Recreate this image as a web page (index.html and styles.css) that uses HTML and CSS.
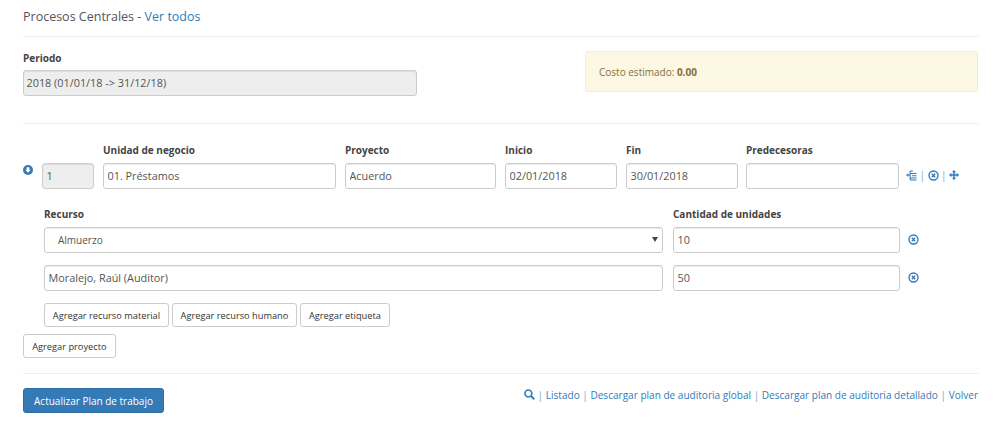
FILE: index.html
```html
<!DOCTYPE html>
<html>
<head>
  <meta charset="utf-8">
  <title>Plan de trabajo</title>
  <link rel="stylesheet" href="styles.css">
</head>
<body>
  <h4 class="title">Procesos Centrales - <a href="#">Ver todos</a></h4>
  <hr class="sep sep-title">

  <div class="top-row">
    <div class="period">
      <label>Periodo</label>
      <input class="field field-wide" type="text" value="2018 (01/01/18 -> 31/12/18)" disabled>
    </div>
    <div class="alert">Costo estimado: <b>0.00</b></div>
  </div>
  <hr class="sep sep-top">

  <div class="project-row">
    <svg class="icon toggle" viewBox="0 0 12 12">
      <circle cx="6" cy="6" r="6" fill="#337ab7"/>
      <path d="M4.400 2.600h3.200v3.200h1.700L6 9.400 2.700 5.800h1.700z" fill="#fff"/>
    </svg>
    <div class="col col-num"><input class="field" type="text" value="1" disabled></div>
    <div class="col col-unit"><label>Unidad de negocio</label><input class="field" type="text" value="01. Préstamos"></div>
    <div class="col col-proj"><label>Proyecto</label><input class="field" type="text" value="Acuerdo"></div>
    <div class="col col-date"><label>Inicio</label><input class="field" type="text" value="02/01/2018"></div>
    <div class="col col-date"><label>Fin</label><input class="field" type="text" value="30/01/2018"></div>
    <div class="col col-pred"><label>Predecesoras</label><input class="field" type="text"></div>
    <div class="actions">
      <a href="#"><svg class="icon" viewBox="0 0 12 12"><path d="M0 5.500h4.500M2.200 3.800v3.400M4.500 1h3M4.500 1v10M4.500 3.700h7M6.500 6.200h5M4.500 8.700h7M4.500 11h7" fill="none" stroke="#337ab7" stroke-width="1.100"/></svg></a>
      <span>|</span>
      <a href="#"><svg class="icon" viewBox="0 0 12 12"><use href="#remove"/></svg></a>
      <span>|</span>
      <a href="#"><svg class="icon icon-move" viewBox="0 0 12 12"><path d="M6 0L8.600 2.800H6.900V5.100H9.200V3.400L12 6 9.200 8.600V6.900H6.900V9.200H8.600L6 12 3.400 9.200H5.100V6.900H2.800V8.600L0 6 2.800 3.400V5.100H5.100V2.800H3.400z" fill="#337ab7"/></svg></a>
    </div>
  </div>

  <div class="resources">
    <div class="res-row res-head">
      <div class="res-name"><label>Recurso</label></div>
      <div class="res-qty"><label>Cantidad de unidades</label></div>
    </div>
    <div class="res-row">
      <div class="res-name field select-box"><span>Almuerzo</span><i class="caret"></i></div>
      <div class="res-qty"><input class="field" type="text" value="10"></div>
      <a class="res-del" href="#"><svg class="icon" viewBox="0 0 12 12"><use href="#remove"/></svg></a>
    </div>
    <div class="res-row">
      <div class="res-name"><input class="field" type="text" value="Moralejo, Raúl (Auditor)"></div>
      <div class="res-qty"><input class="field" type="text" value="50"></div>
      <a class="res-del" href="#"><svg class="icon" viewBox="0 0 12 12"><use href="#remove"/></svg></a>
    </div>
    <div class="res-buttons">
      <button class="btn">Agregar recurso material</button>
      <button class="btn">Agregar recurso humano</button>
      <button class="btn">Agregar etiqueta</button>
    </div>
  </div>

  <button class="btn btn-project">Agregar proyecto</button>
  <hr class="sep sep-bottom">

  <div class="footer-row">
    <button class="btn-primary">Actualizar Plan de trabajo</button>
    <div class="links">
      <a class="search-link" href="#"><svg class="icon search" viewBox="0 0 12 12"><circle cx="4.800" cy="4.800" r="3.700" fill="none" stroke="#337ab7" stroke-width="1.800"/><path d="M7.500 7.500l3.600 3.600" stroke="#337ab7" stroke-width="2.200"/></svg></a>
      | <a href="#">Listado</a>
      | <a href="#">Descargar plan de auditoria global</a>
      | <a href="#">Descargar plan de auditoria detallado</a>
      | <a href="#">Volver</a>
    </div>
  </div>

  <svg class="defs" width="0" height="0">
    <symbol id="remove" viewBox="0 0 12 12">
      <circle cx="6" cy="6" r="4.900" fill="none" stroke="#337ab7" stroke-width="1.500"/>
      <path d="M4.200 4.200l3.600 3.600M7.800 4.200l-3.600 3.600" stroke="#337ab7" stroke-width="1.500"/>
    </symbol>
  </svg>
</body>
</html>
```

FILE: styles.css
```css
* {
  box-sizing: border-box;
}

body {
  margin: 0;
  padding: 0 22px 0 23px;
  font-family: "Open Sans", sans-serif;
  font-size: 10px;
  line-height: 14px;
  color: #555;
  background-color: #fff;
  height: 431px;
  overflow: hidden;
}

a {
  color: #337ab7;
  text-decoration: none;
}

label {
  display: block;
  font-weight: 700;
  font-size: 10px;
  line-height: 14px;
  color: #444;
  margin-bottom: 6px;
}

.title {
  margin: 0;
  padding-top: 9px;
  font-size: 12.500px;
  line-height: 16px;
  font-weight: 400;
}

.sep {
  border: 0;
  border-top: 1px solid #eee;
  margin: 0;
}

.sep-title { margin-top: 11px; }
.sep-top { margin-top: 27px; }
.sep-bottom { margin-top: 15px; }

.field {
  display: block;
  width: 100%;
  height: 26px;
  padding: 0 3.500px 2px;
  font-family: inherit;
  font-size: 10.850px;
  color: #555;
  background-color: #fff;
  border: 1px solid #ccc;
  border-radius: 3px;
  box-shadow: inset 0 1px 1px rgba(0, 0, 0, .075);
}

.field:disabled {
  background-color: #eee;
  opacity: 1;
}

.field-wide {
  padding: 0 2.500px 2px;
}

.top-row {
  display: flex;
  justify-content: space-between;
  margin-top: 14px;
}

.top-row label {
  margin-bottom: 5px;
}

.period {
  width: 394px;
}

.alert {
  width: 393px;
  height: 41px;
  padding: 13px;
  color: #8a6d3b;
  background-color: #fcf8e3;
  border: 1px solid #faebcc;
  border-radius: 3px;
}

.project-row {
  display: flex;
  align-items: flex-end;
  gap: 9px;
  margin-top: 19px;
}

.col-num { width: 52px; }
.col-unit { width: 233px; }
.col-proj { width: 151px; }
.col-date { width: 112px; }
.col-pred { width: 153px; margin-left: -1px; }

.icon {
  display: block;
  width: 11px;
  height: 11px;
}

.icon-move {
  width: 10px;
  height: 10px;
}

.toggle {
  align-self: flex-start;
  width: 10px;
  height: 10px;
  margin-top: 22px;
}

.actions {
  display: flex;
  align-items: center;
  gap: 2.500px;
  height: 26px;
  color: #7aa7cf;
  margin-left: -2px;
  padding-bottom: 2px;
}

.resources {
  margin-top: 18px;
  padding-left: 21px;
}

.res-row {
  display: flex;
  align-items: center;
  gap: 10px;
  margin-bottom: 12px;
}

.res-head {
  margin-bottom: 6px;
}

.res-head label {
  margin: 0;
}

.res-name { width: 619px; }
.res-qty { width: 227px; }

.select-box {
  display: flex;
  align-items: center;
  justify-content: space-between;
  height: 26px;
  padding: 0 4px 0 13px;
  font-size: 10px;
}

.caret {
  width: 0;
  height: 0;
  border-left: 3px solid transparent;
  border-right: 3px solid transparent;
  border-top: 5px solid #444;
  margin-bottom: 2px;
}

.res-del {
  display: block;
  margin-bottom: 2px;
  margin-left: -2px;
}

.res-buttons {
  display: flex;
  gap: 3px;
  margin-bottom: 7px;
}

.btn {
  display: block;
  height: 24px;
  padding: 0 7.800px;
  font-family: inherit;
  font-size: 9.250px;
  color: #333;
  background-color: #fff;
  border: 1px solid #ccc;
  border-radius: 3px;
}

.btn-project {
  padding: 0 8.200px;
}

.footer-row {
  display: flex;
  justify-content: space-between;
  margin-top: 14px;
}

.btn-primary {
  height: 25px;
  width: 141px;
  padding: 0;
  font-family: inherit;
  font-size: 10px;
  color: #fff;
  background-color: #337ab7;
  border: 1px solid #2e6da4;
  border-radius: 3px;
}

.links {
  font-size: 10.050px;
  color: #7aa7cf;
}

.search-link {
  display: inline-block;
  vertical-align: -1px;
}

.defs {
  position: absolute;
}
```
